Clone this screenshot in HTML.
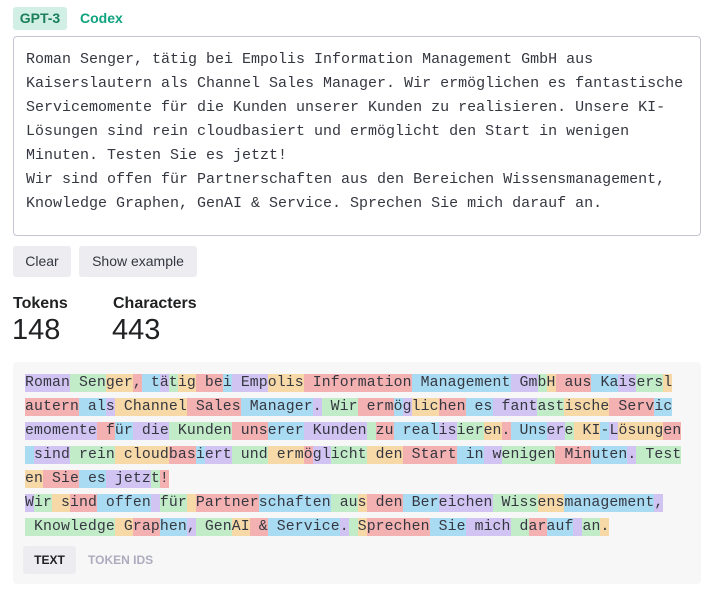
<!DOCTYPE html>
<html><head><meta charset="utf-8"><style>
*{box-sizing:border-box;margin:0;padding:0}
body{width:715px;height:596px;background:#fff;font-family:"Liberation Sans",sans-serif;color:#202123;position:relative;overflow:hidden}
.tab{position:absolute;top:7px;height:23px;font-size:14px;font-weight:bold;line-height:23px}
#gpt{left:13px;width:54px;background:#d2efe6;color:#1a7f5a;border-radius:3px;text-align:center}
#codex{left:80px;color:#10a37f}
#ta{position:absolute;left:13px;top:36px;width:688px;height:200px;border:1px solid #c5c5d2;border-radius:4px;padding:11px 12px;font-family:"Liberation Mono",monospace;font-size:15px;line-height:24px;color:#353740;white-space:pre}
.btn{position:absolute;top:246px;height:31px;background:#ececf1;border-radius:3px;font-size:14px;line-height:31px;text-align:center;color:#353740}
.lbl{position:absolute;top:295px;font-size:16px;font-weight:bold}
.num{position:absolute;top:314px;font-size:29px;font-weight:300;color:#202123}
#box{position:absolute;left:13px;top:362px;width:688px;height:222px;background:#f7f7f8;border-radius:4px}
#tok{position:absolute;left:25px;top:371px;font-family:"Liberation Mono",monospace;font-size:14.8px;letter-spacing:0.11px;line-height:24px;color:#353740;white-space:nowrap}
#tok div{height:24px}
#tok span{display:inline-block;height:18px;line-height:18px;margin-top:3px;white-space:pre;vertical-align:top}
.p{background:#d2c4f2}.g{background:#c2ecc8}.o{background:#f7d9a7}.r{background:#f4b1b1}.b{background:#a9dcf3}
#tt{position:absolute;left:23px;top:546px;width:53px;height:28px;background:#ececf1;border-radius:3px;font-size:12px;font-weight:bold;line-height:28px;text-align:center;color:#202123}
#ti{position:absolute;left:88px;top:546px;font-size:12px;font-weight:bold;line-height:28px;color:#acacbe}
</style></head><body>
<div class="tab" id="gpt">GPT-3</div>
<div class="tab" id="codex">Codex</div>
<div id="ta">Roman Senger, tätig bei Empolis Information Management GmbH aus
Kaiserslautern als Channel Sales Manager. Wir ermöglichen es fantastische
Servicemomente für die Kunden unserer Kunden zu realisieren. Unsere KI-
Lösungen sind rein cloudbasiert und ermöglicht den Start in wenigen
Minuten. Testen Sie es jetzt!
Wir sind offen für Partnerschaften aus den Bereichen Wissensmanagement,
Knowledge Graphen, GenAI &amp; Service. Sprechen Sie mich darauf an.</div>
<div class="btn" style="left:13px;width:58px">Clear</div>
<div class="btn" style="left:79px;width:118px">Show example</div>
<div class="lbl" style="left:13px">Tokens</div>
<div class="lbl" style="left:113px">Characters</div>
<div class="num" style="left:12px">148</div>
<div class="num" style="left:112px">443</div>
<div id="box"></div>
<div id="tok"><div><span class="p">Roman</span><span class="g"> Sen</span><span class="o">ger</span><span class="r">,</span><span class="b"> t</span><span class="p">ä</span><span class="g">t</span><span class="o">ig</span><span class="r"> be</span><span class="b">i</span><span class="p"> Emp</span><span class="o">olis</span><span class="r"> Inform</span><span class="r">ation</span><span class="b"> Management</span><span class="p"> Gm</span><span class="g">b</span><span class="o">H</span><span class="r"> aus</span><span class="b"> Ka</span><span class="p">is</span><span class="g">ers</span><span class="o">l</span></div><div><span class="r">autern</span><span class="b"> al</span><span class="p">s</span><span class="o"> Channel</span><span class="r"> Sales</span><span class="b"> Manager</span><span class="p">.</span><span class="g"> Wir</span><span class="r"> erm</span><span class="b">ö</span><span class="p">g</span><span class="o">lic</span><span class="r">hen</span><span class="b"> es</span><span class="p"> fant</span><span class="g">ast</span><span class="o">ische</span><span class="r"> Serv</span><span class="b">ic</span></div><div><span class="p">emomente</span><span class="r"> f</span><span class="b">ür</span><span class="p"> die</span><span class="g"> Kunden</span><span class="r"> uns</span><span class="b">erer</span><span class="p"> Kunden</span><span class="g"> </span><span class="r">zu</span><span class="b"> real</span><span class="p">is</span><span class="g">ier</span><span class="o">en</span><span class="r">.</span><span class="b"> Uns</span><span class="p">er</span><span class="g">e</span><span class="o"> KI</span><span class="b">-</span><span class="p">L</span><span class="o">ösung</span><span class="r">en</span></div><div><span class="b"> </span><span class="p">sind</span><span class="g"> rein</span><span class="o"> cloud</span><span class="r">bas</span><span class="b">i</span><span class="p">ert</span><span class="g"> und</span><span class="o"> erm</span><span class="r">ö</span><span class="p">gl</span><span class="g">icht</span><span class="o"> den</span><span class="r"> Start</span><span class="b"> in</span><span class="p"> w</span><span class="g">enigen</span><span class="r"> Min</span><span class="b">uten</span><span class="p">.</span><span class="g"> Test</span></div><div><span class="o">en</span><span class="r"> Sie</span><span class="b"> es</span><span class="p"> jetz</span><span class="g">t</span><span class="r">!</span></div><div><span class="p">W</span><span class="g">ir</span><span class="o"> s</span><span class="r">ind</span><span class="b"> offen</span><span class="p"> </span><span class="g">für</span><span class="o"> </span><span class="r">Partner</span><span class="b">schaften</span><span class="g"> au</span><span class="o">s</span><span class="r"> den</span><span class="b"> Ber</span><span class="p">eichen</span><span class="g"> Wiss</span><span class="o">ens</span><span class="b">management</span><span class="p">,</span></div><div><span class="g"> Knowledge</span><span class="o"> G</span><span class="r">rap</span><span class="b">hen</span><span class="p">,</span><span class="g"> Gen</span><span class="o">AI</span><span class="r"> &amp;</span><span class="b"> Service</span><span class="p">.</span><span class="g"> </span><span class="o">S</span><span class="r">prechen</span><span class="b"> Sie</span><span class="p"> mich</span><span class="g"> d</span><span class="r">ar</span><span class="b">auf</span><span class="p"> </span><span class="g">an</span><span class="o">.</span></div></div>
<div id="tt">TEXT</div>
<div id="ti">TOKEN IDS</div>
</body></html>
